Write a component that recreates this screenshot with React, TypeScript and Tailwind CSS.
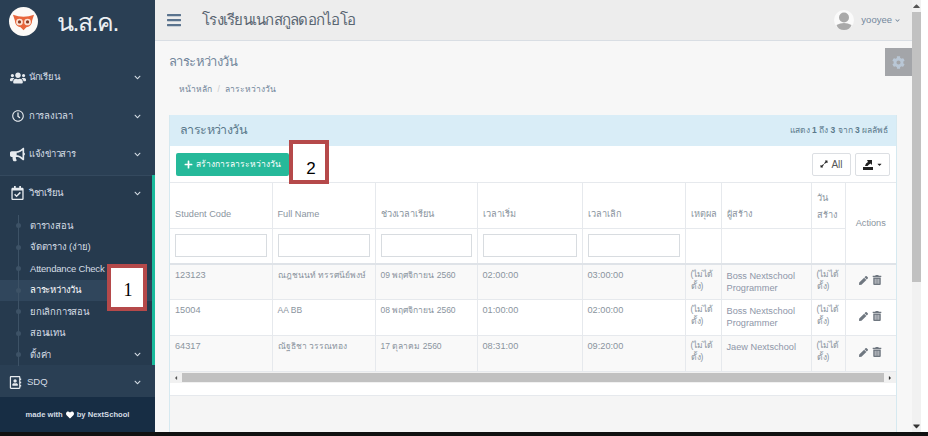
import React from 'react';
import {
  FaUsers,
  FaRegClock,
  FaBullhorn,
  FaRegCalendarCheck,
  FaChevronDown,
  FaBars,
  FaPlus,
  FaCog,
  FaPen,
  FaTrashAlt,
  FaExpandAlt,
  FaHeart,
  FaRegAddressBook,
  FaCaretDown,
  FaCaretUp,
  FaCaretLeft,
  FaCaretRight,
} from 'react-icons/fa';

const font = "font-['Liberation_Sans','Open_Sans','DejaVu_Sans',sans-serif]";

const menuTop = [
  { label: 'นักเรียน', icon: <FaUsers className="text-[16px]" />, h: 'h-[39px]' },
  { label: 'การลงเวลา', icon: <FaRegClock className="text-[12px]" />, h: 'h-[38px]' },
  { label: 'แจ้งข่าวสาร', icon: <FaBullhorn className="text-[15px]" />, h: 'h-[39px]' },
];

const subItems = ['ตารางสอน', 'จัดตาราง (ง่าย)', 'Attendance Check', 'ลาระหว่างวัน', 'ยกเลิกการสอน', 'สอนแทน', 'ตั้งค่า'];

const columns = ['Student Code', 'Full Name', 'ช่วงเวลาเรียน', 'เวลาเริ่ม', 'เวลาเลิก'];

const rows = [
  { code: '123123', name: 'ณฎชนนท์ ทรรศนีย์พงษ์', date: '09 พฤศจิกายน 2560', start: '02:00:00', end: '03:00:00', by: ['Boss Nextschool', 'Programmer'] },
  { code: '15004', name: 'AA BB', date: '08 พฤศจิกายน 2560', start: '01:00:00', end: '02:00:00', by: ['Boss Nextschool', 'Programmer'] },
  { code: '64317', name: 'ณัฐธิชา วรรณทอง', date: '17 ตุลาคม 2560', start: '08:31:00', end: '09:20:00', by: ['Jaew Nextschool'] },
];

const cell = 'border-r border-[#e6e9ed] px-[5px]';

const NotSet: React.FC = () => (
  <td className={`${cell} whitespace-nowrap pt-[3px] align-top text-[8.5px] leading-[12px]`}>
    (ไม่ได้
    <br />
    ตั้ง)
  </td>
);

const Sidebar: React.FC = () => (
  <aside className="flex w-[155px] shrink-0 flex-col bg-[#2a3f54] text-[#d5dde5]">
    <div className="flex h-[58px] shrink-0 items-start pl-[9px] pt-[7px]">
      <div className="flex h-[29px] w-[29px] items-center justify-center rounded-full bg-[#fdfaf7]">
        <svg viewBox="0 0 24 24" className="h-[23px] w-[23px]">
          <path d="M1 5 Q12 9 23 5 L21 11 Q21 17 15 18 L12 21 L9 18 Q3 17 3 11 Z" fill="#e8663c" />
          <circle cx="7.8" cy="12.5" r="3.5" fill="#fbe3d6" />
          <circle cx="16.2" cy="12.5" r="3.5" fill="#fbe3d6" />
          <circle cx="7.8" cy="12.5" r="1.7" fill="#8a3a22" />
          <circle cx="16.2" cy="12.5" r="1.7" fill="#8a3a22" />
        </svg>
      </div>
      <span className="ml-[19px] text-[25px] leading-[30px] tracking-[-1.5px] text-[#eceff2]">น.ส.ค.</span>
    </div>
    {menuTop.map(item => (
      <div key={item.label} className={`flex ${item.h} shrink-0 items-center pl-[9px] pr-[14px] text-[9.5px] tracking-[-0.3px]`}>
        <span className="flex w-[17px] justify-center text-[#e7ebef]">{item.icon}</span>
        <span className="ml-[3px]">{item.label}</span>
        <FaChevronDown className="ml-auto text-[7px]" />
      </div>
    ))}
    <div className="mt-[1px] h-[190px] shrink-0 border-r-[3px] border-[#1abb9c] bg-[#263a4e]">
      <div className="flex h-[35px] items-center border-t border-[#34495e] pl-[9px] pr-[11px] text-[9.5px] tracking-[-0.3px]">
        <FaRegCalendarCheck className="w-[17px] text-[14px] text-[#e7ebef]" />
        <span className="ml-[3px]">วิชาเรียน</span>
        <FaChevronDown className="ml-auto text-[7px]" />
      </div>
      <div className="pt-[5px]">
        {subItems.map((label, i) => (
          <div
            key={label}
            className={`flex h-[21.5px] items-center pl-[18px] pr-[11px] text-[9.5px] tracking-[-0.2px] ${i === 3 ? 'bg-[#30465c] text-white' : ''}`}
          >
            <span className="relative flex h-full items-center whitespace-nowrap border-l border-[#3d5266] pl-[11px]">
              <span className="absolute left-[-3px] h-[5px] w-[5px] rounded-full bg-[#3d5266]" />
              {label}
            </span>
            {i === 6 && <FaChevronDown className="ml-auto text-[7px]" />}
          </div>
        ))}
      </div>
    </div>
    <div className="flex h-[32px] shrink-0 items-center pl-[9px] pr-[14px] pt-[2px] text-[9.5px]">
      <FaRegAddressBook className="w-[13px] text-[13px] text-[#e7ebef]" />
      <span className="ml-[5px]">SDQ</span>
      <FaChevronDown className="ml-auto text-[7px]" />
    </div>
    <div className="flex flex-1 items-center justify-center bg-[#172d44] text-[7.6px] font-bold text-[#d5dde5]">
      made with <FaHeart className="mx-[3px] text-[8px] text-white" /> by NextSchool
    </div>
  </aside>
);

const TopBar: React.FC = () => (
  <header className="flex h-[41px] shrink-0 items-center border-b border-[#d9dee4] bg-[#ededed] pl-[11px] pr-[12px]">
    <FaBars className="text-[16px] text-[#5a738e]" />
    <h1 className="ml-[20px] text-[15px] font-normal tracking-[-0.75px] text-[#5a6672]">โรงเรียนเนกสกูลดอกไอโอ</h1>
    <div className="ml-auto flex items-center text-[9.5px] text-[#73879c]">
      <svg viewBox="0 0 20 20" className="h-[20px] w-[20px]">
        <circle cx="10" cy="10" r="10" fill="#fafafa" />
        <circle cx="10" cy="7.5" r="5" fill="#a9a9a9" />
        <path d="M2.5 15 Q10 11 17.5 15 Q16 20 10 20 Q4 20 2.5 15Z" fill="#a9a9a9" />
      </svg>
      <span className="ml-[7px]">yooyee</span>
      <FaChevronDown className="ml-[3px] text-[5px]" />
    </div>
  </header>
);

const DataTable: React.FC = () => (
  <table className="w-full table-fixed border-collapse text-[9.2px] text-[#8a949e]">
    <colgroup>
      <col className="w-[102px]" />
      <col className="w-[103px]" />
      <col className="w-[102px]" />
      <col className="w-[105px]" />
      <col className="w-[103px]" />
      <col className="w-[36px]" />
      <col className="w-[90px]" />
      <col className="w-[34px]" />
      <col className="w-[51px]" />
    </colgroup>
    <thead>
      <tr className="h-[46px] border-y border-[#e6e9ed]">
        {columns.map(c => (
          <th key={c} className={`${cell} pb-[6px] text-left align-bottom font-normal`}>{c}</th>
        ))}
        <th className={`${cell} pb-[6px] text-left align-bottom font-normal`}>เหตุผล</th>
        <th className={`${cell} pb-[6px] text-left align-bottom font-normal`}>ผู้สร้าง</th>
        <th className={`${cell} pb-[4px] text-left align-bottom font-normal leading-[17px]`}>วัน สร้าง</th>
        <th rowSpan={2} className="px-[5px] pt-[3px] text-center align-middle font-normal">Actions</th>
      </tr>
      <tr className="h-[35px] border-b-2 border-[#dfe3e8]">
        {columns.map(c => (
          <td key={c} className={`${cell} align-middle`}>
            <div className="h-[23px] w-full border border-[#d8dce0] bg-white" />
          </td>
        ))}
        <td className={cell} />
        <td className={cell} />
        <td className={cell} />
      </tr>
    </thead>
    <tbody>
      {rows.map((row, i) => (
        <tr key={row.code} className={`h-[36px] border-b border-[#e6e9ed] ${i % 2 === 0 ? 'bg-[#f9f9f9]' : 'bg-white'}`}>
          <td className={`${cell} pt-[4px] align-top`}>{row.code}</td>
          <td className={`${cell} truncate pt-[4px] align-top text-[8.5px]`}>{row.name}</td>
          <td className={`${cell} truncate pt-[4px] align-top text-[8.5px]`}>{row.date}</td>
          <td className={`${cell} pt-[4px] align-top`}>{row.start}</td>
          <td className={`${cell} pt-[4px] align-top`}>{row.end}</td>
          <NotSet />
          <td className={`${cell} pt-[5px] align-top leading-[12px] text-[#8e96a8]`}>
            {row.by.map(line => (
              <div key={line}>{line}</div>
            ))}
          </td>
          <NotSet />
          <td className="align-middle">
            <div className="flex items-center justify-center gap-[4px] pb-[3px] text-[#6f7780]">
              <FaPen className="text-[9px]" />
              <FaTrashAlt className="text-[10px]" />
            </div>
          </td>
        </tr>
      ))}
    </tbody>
  </table>
);

const Panel: React.FC = () => (
  <section className="flex w-[728px] flex-1 flex-col border-x border-[#d6e9f0] bg-white">
    <div className="flex h-[31px] shrink-0 items-center justify-between bg-[#d9edf7] pl-[10px] pr-[8px]">
      <h2 className="text-[12.5px] font-normal tracking-[-0.6px] text-[#5b7a8c]">ลาระหว่างวัน</h2>
      <span className="text-[8.5px] text-[#5b7a8c]">แสดง <b>1</b> ถึง <b>3</b> จาก <b>3</b> ผลลัพธ์</span>
    </div>
    <div className="flex h-[36px] shrink-0 items-center justify-between pl-[6px] pr-[6px]">
      <button className="flex h-[23px] w-[113px] items-center justify-center rounded-[2px] bg-[#26b99a] text-[8.5px] text-white">
        <FaPlus className="mr-[3px] text-[9px]" /> สร้างการลาระหว่างวัน
      </button>
      <div className="flex gap-[4px] text-[#555]">
        <button className="flex h-[23px] w-[39px] items-center justify-center gap-[3px] rounded-[2px] border border-[#dcdfe3] bg-white text-[10px]">
          <FaExpandAlt className="text-[8px] text-[#222]" /> All
        </button>
        <button className="flex h-[23px] w-[35px] items-center justify-center gap-[3px] rounded-[2px] border border-[#dcdfe3] bg-white text-[#222]">
          <svg viewBox="0 0 10 11" className="h-[11px] w-[10px]" fill="currentColor">
            <path d="M0 8 H10 V11 H0Z M2 7 Q2.5 4 5 3 L4 1 H9 V6 L7.5 4.5 Q5.5 5.5 4.5 7Z" />
          </svg>
          <FaCaretDown className="text-[7px]" />
        </button>
      </div>
    </div>
    <DataTable />
    <div className="flex h-[11px] shrink-0 items-center bg-[#f1f1f1]">
      <FaCaretLeft className="mx-[3px] w-[6px] text-[6px] text-[#555]" />
      <div className="h-[9px] flex-1 bg-[#c1c1c1]" />
      <FaCaretRight className="mx-[3px] w-[6px] text-[6px] text-[#333]" />
    </div>
    <div className="h-[13px] shrink-0 border-b border-[#e6e9ed] bg-white" />
    <div className="flex-1 bg-[#f5f5f5]" />
  </section>
);

const App: React.FC = () => (
  <div className={`relative flex h-[436px] w-[928px] flex-col overflow-hidden bg-white ${font}`}>
    <div className="flex min-h-0 flex-1">
      <Sidebar />
      <main className="flex min-w-0 flex-1 flex-col bg-[#f7f7f7]">
        <TopBar />
        <div className="flex min-h-0 flex-1 flex-col pl-[14px]">
          <div className="flex h-[74px] shrink-0 justify-between">
            <div>
              <p className="pt-[11px] text-[13px] leading-[20px] tracking-[-0.6px] text-[#73879c]">ลาระหว่างวัน</p>
              <p className="pl-[10px] pt-[11px] text-[8.5px] text-[#73879c]">
                หน้าหลัก <span className="mx-[3px] text-[#ccc]">/</span> ลาระหว่างวัน
              </p>
            </div>
            <div className="mt-[7px] flex h-[28px] w-[27px] items-center justify-center bg-[#a3a5a9]">
              <FaCog className="text-[13px] text-[#b9c7d6]" />
            </div>
          </div>
          <Panel />
        </div>
      </main>
      <div className="flex w-[16px] shrink-0 bg-white">
        <div className="flex w-[9px] flex-col items-center bg-[#f1f1f1]">
          <FaCaretUp className="h-[12px] text-[7px] text-[#555]" />
          <div className="h-[270px] w-full bg-[#c1c1c1]" />
          <FaCaretDown className="mt-auto h-[12px] text-[7px] text-[#333]" />
        </div>
      </div>
    </div>
    <div className="h-[4px] shrink-0 bg-[#111]" />

    <div className="absolute left-[107px] top-[264px] flex h-[47px] w-[40px] items-center justify-center border-[4px] border-[#b5494a] bg-white pl-[2px] pt-[6px] font-['Liberation_Serif',serif] text-[18px] text-black">1</div>
    <div className="absolute left-[289px] top-[140px] flex h-[44px] w-[40px] items-center justify-center border-[4px] border-[#b5494a] bg-white pl-[4px] pt-[13px] text-[17px] text-black">2</div>
  </div>
);

export default App;
